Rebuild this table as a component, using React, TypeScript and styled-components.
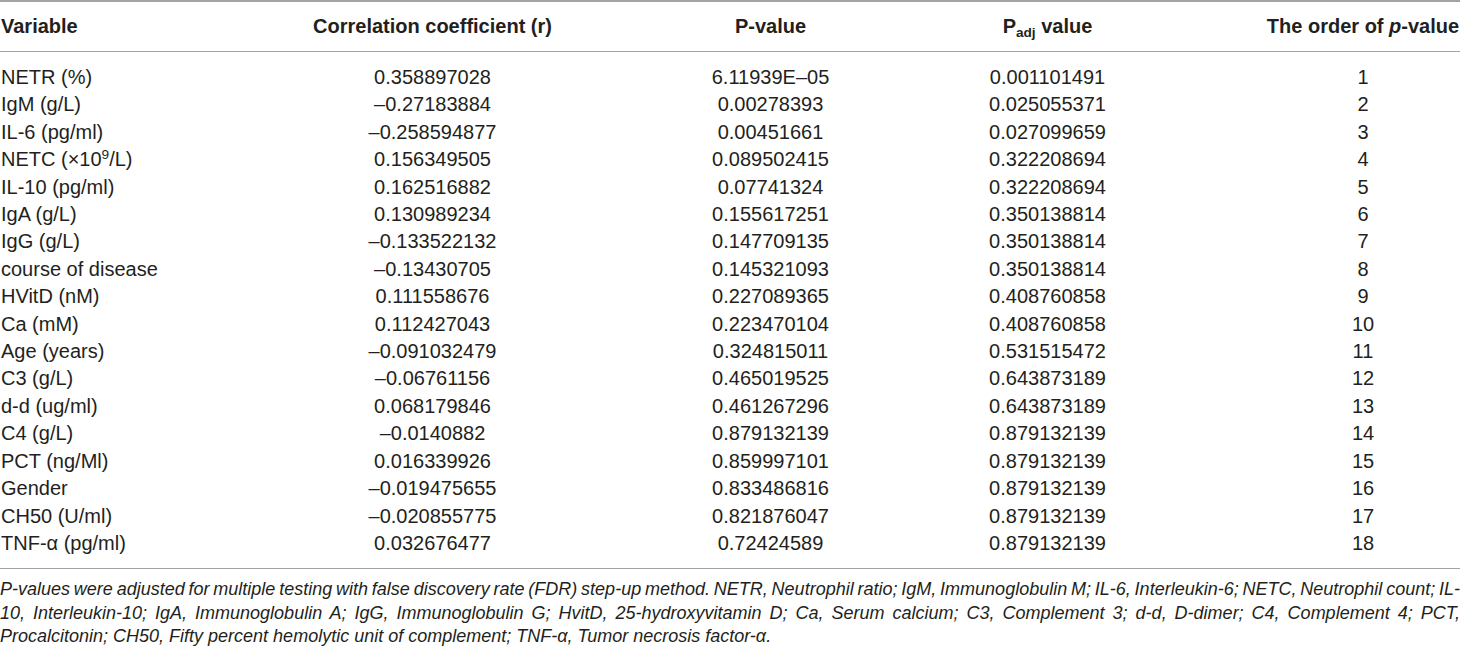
import React from "react";
import styled, { createGlobalStyle } from "styled-components";

const GlobalStyle = createGlobalStyle`
  html, body { margin: 0; padding: 0; background: #ffffff; }
  body {
    font-family: "Liberation Sans", Arial, Helvetica, sans-serif;
    color: #231f20;
  }
`;

const Page = styled.div`
  width: 1460px;
`;

const Table = styled.table`
  width: 1460px;
  border-collapse: collapse;
  table-layout: fixed;
  border-top: 2px solid #a3a3a3;
  border-bottom: 1px solid #a3a3a3;
  font-size: 20px;
`;

type Align = "left" | "center";

const HeadCell = styled.th<{ $align: Align; $padLeft?: number }>`
  height: 49px;
  padding: 0 0 0 ${(p) => p.$padLeft ?? 1}px;
  font-weight: 700;
  text-align: ${(p) => p.$align};
  vertical-align: middle;
  white-space: nowrap;
  border-bottom: 1px solid #a3a3a3;
`;

const Row = styled.tr`
  &:first-child td { padding-top: 12px; }
  &:last-child td { padding-bottom: 10.5px; }
`;

const Cell = styled.td<{ $align: Align; $padLeft?: number }>`
  height: 27.4px;
  padding: 0 0 0 ${(p) => p.$padLeft ?? 1}px;
  text-align: ${(p) => p.$align};
  vertical-align: middle;
  white-space: nowrap;
  font-weight: 400;
  line-height: 27.4px;
`;

const Sub = styled.sub`
  font-size: 0.68em;
  vertical-align: -0.3em;
  line-height: 0;
`;

const Sup = styled.sup`
  font-size: 0.68em;
  vertical-align: 0.55em;
  line-height: 0;
`;

const Footnote = styled.div`
  margin-top: 9.5px;
  font-style: italic;
  font-size: 18px;
  line-height: 23.5px;
`;

const FootLine = styled.div<{ $justify?: boolean }>`
  text-align: ${(p) => (p.$justify ? "justify" : "left")};
  text-align-last: ${(p) => (p.$justify ? "justify" : "left")};
  white-space: ${(p) => (p.$justify ? "normal" : "nowrap")};
  word-spacing: ${(p) => (p.$justify ? "-2px" : "0")};
`;

type RowData = [React.ReactNode, string, string, string, string];

const rows: RowData[] = [
  ["NETR (%)", "0.358897028", "6.11939E\u201305", "0.001101491", "1"],
  ["IgM (g/L)", "\u20130.27183884", "0.00278393", "0.025055371", "2"],
  ["IL-6 (pg/ml)", "\u20130.258594877", "0.00451661", "0.027099659", "3"],
  [
    <>
      NETC (×10<Sup>9</Sup>/L)
    </>,
    "0.156349505",
    "0.089502415",
    "0.322208694",
    "4",
  ],
  ["IL-10 (pg/ml)", "0.162516882", "0.07741324", "0.322208694", "5"],
  ["IgA (g/L)", "0.130989234", "0.155617251", "0.350138814", "6"],
  ["IgG (g/L)", "\u20130.133522132", "0.147709135", "0.350138814", "7"],
  ["course of disease", "\u20130.13430705", "0.145321093", "0.350138814", "8"],
  ["HVitD (nM)", "0.111558676", "0.227089365", "0.408760858", "9"],
  ["Ca (mM)", "0.112427043", "0.223470104", "0.408760858", "10"],
  ["Age (years)", "\u20130.091032479", "0.324815011", "0.531515472", "11"],
  ["C3 (g/L)", "\u20130.06761156", "0.465019525", "0.643873189", "12"],
  ["d-d (ug/ml)", "0.068179846", "0.461267296", "0.643873189", "13"],
  ["C4 (g/L)", "\u20130.0140882", "0.879132139", "0.879132139", "14"],
  ["PCT (ng/Ml)", "0.016339926", "0.859997101", "0.879132139", "15"],
  ["Gender", "\u20130.019475655", "0.833486816", "0.879132139", "16"],
  ["CH50 (U/ml)", "\u20130.020855775", "0.821876047", "0.879132139", "17"],
  ["TNF-\u03b1 (pg/ml)", "0.032676477", "0.72424589", "0.879132139", "18"],
];

const ORDER_PAD = 111;

export default function App() {
  return (
    <Page>
      <GlobalStyle />
      <Table>
        <colgroup>
          <col style={{ width: 263 }} />
          <col style={{ width: 338 }} />
          <col style={{ width: 338 }} />
          <col style={{ width: 216 }} />
          <col style={{ width: 305 }} />
        </colgroup>
        <thead>
          <tr>
            <HeadCell $align="left">Variable</HeadCell>
            <HeadCell $align="center">Correlation coefficient (r)</HeadCell>
            <HeadCell $align="center">P-value</HeadCell>
            <HeadCell $align="center">
              P<Sub>adj</Sub> value
            </HeadCell>
            <HeadCell $align="center" $padLeft={ORDER_PAD}>
              The order of <i>p</i>-value
            </HeadCell>
          </tr>
        </thead>
        <tbody>
          {rows.map((r, i) => (
            <Row key={i}>
              <Cell $align="left">{r[0]}</Cell>
              <Cell $align="center">{r[1]}</Cell>
              <Cell $align="center">{r[2]}</Cell>
              <Cell $align="center">{r[3]}</Cell>
              <Cell $align="center" $padLeft={ORDER_PAD}>
                {r[4]}
              </Cell>
            </Row>
          ))}
        </tbody>
      </Table>
      <Footnote>
        <FootLine $justify>
          P-values were adjusted for multiple testing with false discovery rate (FDR) step-up
          method. NETR, Neutrophil ratio; IgM, Immunoglobulin M; IL-6, Interleukin-6; NETC,
          Neutrophil count; IL-
        </FootLine>
        <FootLine $justify>
          10, Interleukin-10; IgA, Immunoglobulin A; IgG, Immunoglobulin G; HvitD,
          25-hydroxyvitamin D; Ca, Serum calcium; C3, Complement 3; d-d, D-dimer; C4, Complement
          4; PCT,
        </FootLine>
        <FootLine>
          Procalcitonin; CH50, Fifty percent hemolytic unit of complement; TNF-{"\u03b1"}, Tumor
          necrosis factor-{"\u03b1"}.
        </FootLine>
      </Footnote>
    </Page>
  );
}
